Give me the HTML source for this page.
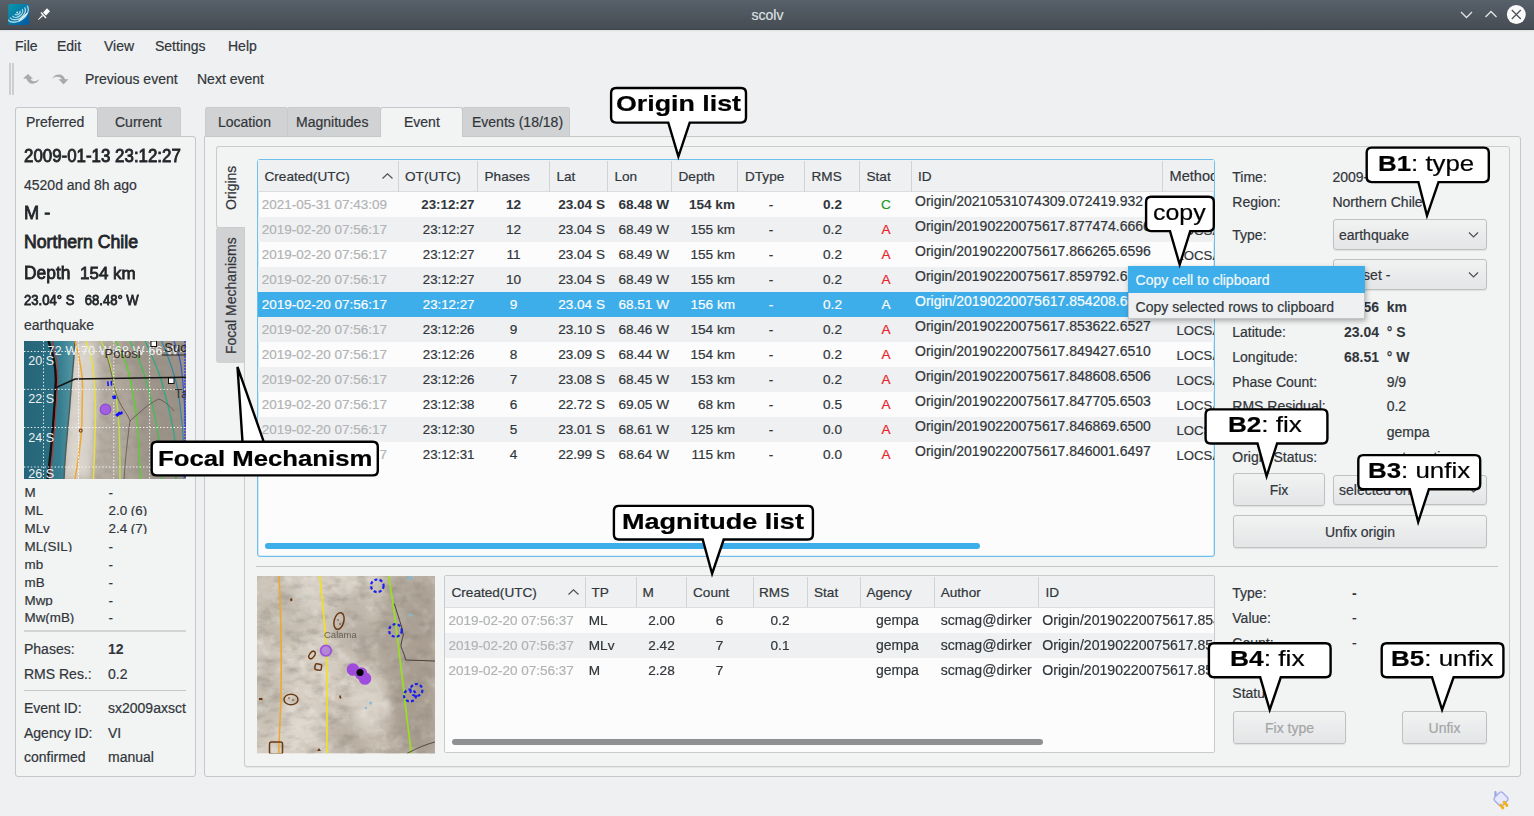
<!DOCTYPE html>
<html><head><meta charset="utf-8"><title>scolv</title><style>*{box-sizing:border-box;margin:0;padding:0}
html,body{width:1534px;height:816px;overflow:hidden}
body{background:#eff0f1;font-family:"Liberation Sans",sans-serif;font-size:14px;color:#31363b;position:relative}
.a{position:absolute}
.t{position:absolute;white-space:nowrap;line-height:1;-webkit-text-stroke:0.2px currentColor}
svg{position:absolute;overflow:visible}
</style></head><body>
<div class="a" style="left:0px;top:0px;width:1534px;height:30px;background:linear-gradient(#57616a,#464c53 96%,#3e4349 96%)"></div>
<div class="a" style="left:0px;top:30px;width:1534px;height:2px;background:linear-gradient(#e2e3e4,#eceded)"></div>
<svg style="left:0;top:0" width="60" height="30"><defs><linearGradient id="ig" x1="0" y1="0" x2="1" y2="1"><stop offset="0" stop-color="#0a9aab"/><stop offset="1" stop-color="#0058a6"/></linearGradient></defs>
<rect x="8.2" y="3.9" width="21" height="21" rx="2.5" fill="url(#ig)"/>
<clipPath id="icc"><rect x="8.2" y="3.9" width="21" height="21" rx="2.5"/></clipPath><g clip-path="url(#icc)"><g fill="none" stroke="#cdebf1" stroke-width="1.3" opacity="0.85"><path d="M14.84 14.22 A3 2.16 -35 0 0 19.76 10.78"/><path d="M12.39 15.94 A6 4.32 -35 0 0 22.21 9.06"/><path d="M9.93 17.66 A9 6.4799999999999995 -35 0 0 24.67 7.34"/><path d="M7.47 19.38 A12 8.64 -35 0 0 27.13 5.62"/></g>
<path d="M18.8 21.1 L27.4 13.3" stroke="#e8f6f8" stroke-width="1.4"/></g>
<circle cx="17.2" cy="12.5" r="0.9" fill="#cfeef3"/>
<g fill="#fff"><path d="M43 12.5 L47 8.2 L50 11.3 L46 15.5 Z"/><path d="M41.5 12 L46.5 17.5 L45.5 18.5 L40.5 13 Z"/><path d="M43 16 L38.5 20 L38 19.5 L42 15 Z"/></g>
</svg>
<div class="t" style="left:751.5px;top:8.15px;font-size:14px;color:#dfe1e3">scolv</div>
<svg style="left:1440px;top:0" width="94" height="30">
<path d="M21 12 L26.5 17.5 L32 12" fill="none" stroke="#e3e5e7" stroke-width="1.3"/>
<path d="M45.5 17 L51 11.5 L56.5 17" fill="none" stroke="#e3e5e7" stroke-width="1.3"/>
<circle cx="76.3" cy="14.5" r="9.4" fill="#fbfbfb"/>
<path d="M71.8 10 L80.8 19 M80.8 10 L71.8 19" stroke="#4b5056" stroke-width="1.2"/>
</svg>
<div class="t" style="left:15px;top:39.15px;font-size:14px">File</div>
<div class="t" style="left:57px;top:39.15px;font-size:14px">Edit</div>
<div class="t" style="left:104px;top:39.15px;font-size:14px">View</div>
<div class="t" style="left:155px;top:39.15px;font-size:14px">Settings</div>
<div class="t" style="left:228px;top:39.15px;font-size:14px">Help</div>
<div class="a" style="left:9px;top:63px;width:2px;height:32px;background:#cdcecf"></div>
<div class="a" style="left:12px;top:63px;width:2px;height:32px;background:#cdcecf"></div>
<svg style="left:0;top:60px" width="80" height="40">
<path d="M23 18.5 L28 14 L33 18.8 L30.5 18.8 C31.5 21.5 34 22.5 39.5 19.3 C37 24 29 26.5 26.5 18.8 Z" fill="#a9aaab"/>
<path d="M52 19 C55 13 63.5 13 65 19.3 L68.5 19.3 L63.5 24.5 L58.5 19.3 L62 19.3 C60 16 55 16 52 19 Z" fill="#a9aaab"/>
</svg>
<div class="t" style="left:85px;top:72.15px;font-size:14px">Previous event</div>
<div class="t" style="left:197px;top:72.15px;font-size:14px">Next event</div>
<div class="a" style="left:15px;top:136px;width:181px;height:641px;background:#f2f3f3;border:1px solid #c6c7c8;border-radius:0 3px 3px 3px"></div>
<div class="a" style="left:97px;top:107px;width:84px;height:29px;background:#d1d2d3;border:1px solid #c9cacb;border-bottom:none;border-radius:3px 3px 0 0"></div>
<div class="a" style="left:15px;top:107px;width:83px;height:30px;background:#f2f3f3;border:1px solid #c6c7c8;border-bottom:none;border-radius:3px 3px 0 0"></div>
<div class="t" style="left:26px;top:115.35px;font-size:14px">Preferred</div>
<div class="t" style="left:115px;top:115.35px;font-size:14px">Current</div>
<div class="t" style="left:24px;top:149.49px;font-size:16.9px;color:#232629;-webkit-text-stroke:0.8px currentColor;transform:scaleY(1.08);transform-origin:0 14.31px">2009-01-13 23:12:27</div>
<div class="t" style="left:24px;top:178.15px;font-size:14px">4520d and 8h ago</div>
<div class="t" style="left:24px;top:203.59px;font-size:18.2px;color:#232629;-webkit-text-stroke:0.8px currentColor;transform:scaleY(1.05);transform-origin:0 15.41px">M -</div>
<div class="t" style="left:24px;top:234.02px;font-size:17.7px;color:#232629;-webkit-text-stroke:0.8px currentColor;transform:scaleY(1.0);transform-origin:0 14.98px">Northern Chile</div>
<div class="t" style="left:24px;top:264.57px;font-size:17.4px;color:#232629;-webkit-text-stroke:0.8px currentColor;transform:scaleY(1.02);transform-origin:0 14.73px">Depth</div>
<div class="t" style="left:80px;top:264.91px;font-size:17.0px;color:#232629;-webkit-text-stroke:0.8px currentColor;transform:scaleY(1.02);transform-origin:0 14.39px">154 km</div>
<div class="t" style="left:24px;top:294.11px;font-size:13.1px;color:#232629;-webkit-text-stroke:0.75px currentColor;transform:scaleY(1.05);transform-origin:0 11.09px">23.04° S</div>
<div class="t" style="left:84.7px;top:294.11px;font-size:13.1px;color:#232629;-webkit-text-stroke:0.75px currentColor;transform:scaleY(1.05);transform-origin:0 11.09px">68.48° W</div>
<div class="t" style="left:24px;top:318.15px;font-size:14px">earthquake</div>
<svg style="left:24px;top:341px" width="162" height="138" viewBox="0 0 162 138">
<defs><clipPath id="c1"><rect width="162" height="138"/></clipPath>
<linearGradient id="oc" x1="0" x2="1"><stop offset="0" stop-color="#2b6c80"/><stop offset="0.7" stop-color="#357d8f"/><stop offset="1" stop-color="#5a9aa5"/></linearGradient>
<linearGradient id="ld" x1="0" x2="1"><stop offset="0" stop-color="#d6d1ca"/><stop offset="0.2" stop-color="#c0b8ae"/><stop offset="0.6" stop-color="#b0a79c"/><stop offset="1" stop-color="#a39a8f"/></linearGradient>
<filter id="bl1" x="-50%" y="-50%" width="200%" height="200%"><feGaussianBlur stdDeviation="4"/></filter><filter id="nz1"><feTurbulence type="fractalNoise" baseFrequency="0.12" numOctaves="3" seed="7"/><feColorMatrix values="0 0 0 0 0.3  0 0 0 0 0.27  0 0 0 0 0.24  0 0 0 1.3 -0.55"/></filter></defs>
<g clip-path="url(#c1)">
<rect width="162" height="138" fill="url(#ld)"/>
<rect width="162" height="138" filter="url(#nz1)" opacity="0.8"/>
<g filter="url(#bl1)"><path d="M48 0 L72 0 C74 40 72 90 66 138 L40 138 C42 100 46 50 48 0 Z" fill="#e4e0da" opacity="0.75"/><path d="M100 0 L162 0 L162 138 L110 138 C115 90 110 40 100 0 Z" fill="#7d7468" opacity="0.25"/></g>
<path d="M0 0 L51 0 C50 20 47 45 45.6 67.5 C44 85 42 104 41 120 L40 138 L0 138 Z" fill="url(#oc)"/>
<path d="M0 0 L30 0 C34 30 32 90 26 138 L0 138 Z" fill="#1e5a6c" opacity="0.35"/>
<path d="M51 0 C50 20 47 45 45.6 67.5 C44 85 42 104 41 120 L40 138" stroke="#4a5f60" stroke-width="1.5" fill="none"/>
<path d="M24.5 0 C30 15 32 30 31.8 40 C31 60 29.5 80 29 86 C27 110 25 125 23.6 138" stroke="#111" stroke-width="2.4" fill="none"/>
<path d="M28 0 C33 15 34 30 33.7 40 C32 70 29 110 26.3 138" stroke="#c8302a" stroke-width="1" fill="none"/>
<path d="M51 0 C57 20 59 40 58.5 49 C58 70 58 80 57.6 89.6 C56 110 53 125 51 138" stroke="#f0a830" stroke-width="1.5" fill="none"/>
<path d="M62 0 C66 10 69 20 69.5 30.8 C71 50 71.5 65 71.4 76.7 C71 100 70 120 69.5 138" stroke="#e8e040" stroke-width="1.5" fill="none"/>
<path d="M77 0 C82 10 86 20 88 31 C92 50 94 70 95 86 C96 105 96 120 96 138" stroke="#b8e040" stroke-width="1.4" fill="none"/>
<path d="M91.6 0 C97 10 101 20 104.5 31 C109 50 112 70 113.6 86 C115 105 116 120 116.4 138" stroke="#58d030" stroke-width="1.4" fill="none"/>
<path d="M106 0 C114 15 120 30 124.7 49 C130 70 134 90 135.7 104 C137 120 137.5 130 137.5 138" stroke="#40c050" stroke-width="1.3" fill="none"/>
<path d="M121 0 C128 15 134 28 137.5 40 C143 60 148 80 150.4 95 C152 115 152 125 152 138" stroke="#30a880" stroke-width="1.3" fill="none"/>
<path d="M137.5 0 C144 15 150 30 154 49 C157 70 159 90 159.6 104 C160 120 160 130 160 138" stroke="#3088a8" stroke-width="1.2" fill="none"/>
<path d="M150 0 C154 10 157 20 157.8 31 C160 50 161 70 161.4 86" stroke="#3858c8" stroke-width="1.2" fill="none"/>
<path d="M161 0 V138" stroke="#4040d0" stroke-width="1.5" stroke-dasharray="2 1" fill="none"/>
<path d="M80 6 C83 15 86 25 88 35 C90 45 92 55 96 62 C100 70 104 74 106 80 C104 95 102 110 100 138" stroke="#5a5048" stroke-width="0.8" fill="none"/>
<path d="M106 80 C115 72 125 62 135 58 C140 60 145 64 150 70" stroke="#5a5048" stroke-width="0.8" fill="none"/>
<path d="M31 47 L51 38 L162 36.3" stroke="#151515" stroke-width="1.6" fill="none"/>
<g stroke="#ffffff" stroke-width="1" stroke-dasharray="1.4 2" opacity="0.9">
<path d="M0 10.5 H162 M0 48.4 H162 M0 86.5 H162 M0 126 H162 M19.5 0 V138 M54.5 0 V138 M89.75 0 V138 M125.6 0 V138"/></g>
<g fill="#eef2f3" font-family="Liberation Sans" font-size="12.5"><text x="4.3" y="24.3">20 S</text><text x="4.3" y="62">22 S</text><text x="4.3" y="100.6">24 S</text><text x="4.3" y="137.4">26 S</text>
<text x="23.6" y="14.2" font-size="12.3" letter-spacing="0.3">72 W 70 W 68 W 66 W</text></g>
<text x="80.5" y="17" font-family="Liberation Sans" font-size="13" fill="#3a3028" letter-spacing="0">Potosi</text>
<rect x="127" y="0" width="5.5" height="5.5" fill="#fff" stroke="#111"/>
<rect x="144.5" y="37" width="5.5" height="5.5" fill="#fff" stroke="#111"/>
<text x="140.3" y="11" font-family="Liberation Sans" font-size="13" fill="#222">Suc</text>
<path d="M138 14 H162" stroke="#222" stroke-width="1"/>
<text x="150.4" y="57" font-family="Liberation Sans" font-size="13" fill="#3a342c">Ta</text>
<circle cx="81.5" cy="68.4" r="5.3" fill="#a058e8" stroke="#8a40d8" stroke-width="1.2" opacity="0.9"/>
<g fill="#1010ff"><path d="M83 40.5 L84.5 40.2 L85 45 L83.5 45.3 Z"/><path d="M86.5 40 L88 39.7 L88.3 44.5 L86.8 44.8 Z"/><path d="M88 55 L91.5 54 L92.5 57.5 L89 58.5 Z"/><path d="M91 74 L95 70.5 L97.5 72 L93.5 76 Z"/><path d="M95.5 72 L98 70 L99 72.5 L96.5 74 Z"/></g>
<circle cx="56.7" cy="89.6" r="1.5" fill="none" stroke="#7a4a20" stroke-width="1.2"/>
</g></svg>
<div class="a" style="left:20px;top:483px;width:170px;height:15px;overflow:hidden">
<div class="t" style="left:4.5px;top:2.66px;font-size:13.4px">M</div>
<div class="t" style="left:88.5px;top:2.66px;font-size:13.4px">-</div>
</div>
<div class="a" style="left:20px;top:501px;width:170px;height:15px;overflow:hidden">
<div class="t" style="left:4.5px;top:2.66px;font-size:13.4px">ML</div>
<div class="t" style="left:88.5px;top:2.66px;font-size:13.4px">2.0 (6)</div>
</div>
<div class="a" style="left:20px;top:519px;width:170px;height:15px;overflow:hidden">
<div class="t" style="left:4.5px;top:2.66px;font-size:13.4px">MLv</div>
<div class="t" style="left:88.5px;top:2.66px;font-size:13.4px">2.4 (7)</div>
</div>
<div class="a" style="left:20px;top:537px;width:170px;height:15px;overflow:hidden">
<div class="t" style="left:4.5px;top:2.66px;font-size:13.4px">ML(SIL)</div>
<div class="t" style="left:88.5px;top:2.66px;font-size:13.4px">-</div>
</div>
<div class="a" style="left:20px;top:555px;width:170px;height:15px;overflow:hidden">
<div class="t" style="left:4.5px;top:2.66px;font-size:13.4px">mb</div>
<div class="t" style="left:88.5px;top:2.66px;font-size:13.4px">-</div>
</div>
<div class="a" style="left:20px;top:573px;width:170px;height:15px;overflow:hidden">
<div class="t" style="left:4.5px;top:2.66px;font-size:13.4px">mB</div>
<div class="t" style="left:88.5px;top:2.66px;font-size:13.4px">-</div>
</div>
<div class="a" style="left:20px;top:591px;width:170px;height:15px;overflow:hidden">
<div class="t" style="left:4.5px;top:2.66px;font-size:13.4px">Mwp</div>
<div class="t" style="left:88.5px;top:2.66px;font-size:13.4px">-</div>
</div>
<div class="a" style="left:20px;top:608.5px;width:170px;height:15px;overflow:hidden">
<div class="t" style="left:4.5px;top:2.66px;font-size:13.4px">Mw(mB)</div>
<div class="t" style="left:88.5px;top:2.66px;font-size:13.4px">-</div>
</div>
<div class="a" style="left:24px;top:630px;width:162px;height:2px;background:#d3d4d5"></div>
<div class="t" style="left:24px;top:641.65px;font-size:14px">Phases:</div>
<div class="t" style="left:108px;top:641.65px;font-size:14px;font-weight:bold;-webkit-text-stroke:0.05px currentColor">12</div>
<div class="t" style="left:24px;top:666.65px;font-size:14px">RMS Res.:</div>
<div class="t" style="left:108px;top:666.65px;font-size:14px">0.2</div>
<div class="a" style="left:24px;top:690px;width:162px;height:1px;background:#c6c7c8"></div>
<div class="t" style="left:24px;top:700.85px;font-size:14px">Event ID:</div>
<div class="t" style="left:108px;top:700.85px;font-size:14px">sx2009axsct</div>
<div class="t" style="left:24px;top:726.15px;font-size:14px">Agency ID:</div>
<div class="t" style="left:108px;top:726.15px;font-size:14px">VI</div>
<div class="t" style="left:24px;top:750.15px;font-size:14px">confirmed</div>
<div class="t" style="left:108px;top:750.15px;font-size:14px">manual</div>
<div class="a" style="left:204px;top:136px;width:1317px;height:641px;background:#f2f3f3;border:1px solid #c6c7c8;border-radius:0 3px 3px 3px"></div>
<div class="a" style="left:205px;top:107px;width:83px;height:29px;background:#d1d2d3;border:1px solid #c9cacb;border-bottom:none;border-radius:3px 3px 0 0"></div>
<div class="a" style="left:287px;top:107px;width:94px;height:29px;background:#d1d2d3;border:1px solid #c9cacb;border-bottom:none;border-radius:3px 3px 0 0"></div>
<div class="a" style="left:462px;top:107px;width:108px;height:29px;background:#d1d2d3;border:1px solid #c9cacb;border-bottom:none;border-radius:3px 3px 0 0"></div>
<div class="a" style="left:380px;top:107px;width:83px;height:30px;background:#f2f3f3;border:1px solid #c6c7c8;border-bottom:none;border-radius:3px 3px 0 0"></div>
<div class="t" style="left:218px;top:115.35px;font-size:14px">Location</div>
<div class="t" style="left:296px;top:115.35px;font-size:14px">Magnitudes</div>
<div class="t" style="left:404px;top:115.35px;font-size:14px">Event</div>
<div class="t" style="left:472px;top:115.35px;font-size:14px">Events (18/18)</div>
<div class="a" style="left:244px;top:146px;width:1266px;height:621px;background:#f2f3f3;border:1px solid #cbcccd;border-radius:0 3px 3px 3px;box-shadow:0 1px 1px rgba(0,0,0,0.06)"></div>
<div class="a" style="left:216px;top:227px;width:28px;height:136px;background:#d1d2d3;border-radius:3px 0 0 3px"></div>
<div class="a" style="left:216px;top:146px;width:29px;height:82px;background:#f2f3f3;border:1px solid #cbcccd;border-right:none;border-radius:3px 0 0 3px"></div>
<div class="t" style="left:224px;top:210px;font-size:14px;transform:rotate(-90deg);transform-origin:0 0">Origins</div>
<div class="t" style="left:224px;top:354px;font-size:14px;transform:rotate(-90deg);transform-origin:0 0">Focal Mechanisms</div>
<div class="a" style="left:257px;top:159px;width:958px;height:398px;background:#fcfcfc;border:1px solid #6ebfea;border-radius:3px;box-shadow:inset 0 0 0 0.6px #b5def3"></div>
<div class="a" style="left:258px;top:160px;width:956px;height:32px;background:#eff0f1;border-bottom:1px solid #dcdddd"></div>
<div class="a" style="left:398px;top:161px;width:1px;height:31px;background:#d2d3d4"></div>
<div class="a" style="left:477px;top:161px;width:1px;height:31px;background:#d2d3d4"></div>
<div class="a" style="left:549px;top:161px;width:1px;height:31px;background:#d2d3d4"></div>
<div class="a" style="left:607px;top:161px;width:1px;height:31px;background:#d2d3d4"></div>
<div class="a" style="left:671px;top:161px;width:1px;height:31px;background:#d2d3d4"></div>
<div class="a" style="left:737px;top:161px;width:1px;height:31px;background:#d2d3d4"></div>
<div class="a" style="left:804px;top:161px;width:1px;height:31px;background:#d2d3d4"></div>
<div class="a" style="left:859px;top:161px;width:1px;height:31px;background:#d2d3d4"></div>
<div class="a" style="left:911px;top:161px;width:1px;height:31px;background:#d2d3d4"></div>
<div class="a" style="left:1162px;top:161px;width:1px;height:31px;background:#d2d3d4"></div>
<div class="t" style="left:264.5px;top:170.19px;font-size:13.6px">Created(UTC)</div>
<div class="t" style="left:405px;top:170.19px;font-size:13.6px">OT(UTC)</div>
<div class="t" style="left:484.5px;top:170.19px;font-size:13.6px">Phases</div>
<div class="t" style="left:556.5px;top:170.19px;font-size:13.6px">Lat</div>
<div class="t" style="left:614.5px;top:170.19px;font-size:13.6px">Lon</div>
<div class="t" style="left:678.5px;top:170.19px;font-size:13.6px">Depth</div>
<div class="t" style="left:745px;top:170.19px;font-size:13.6px">DType</div>
<div class="t" style="left:811.5px;top:170.19px;font-size:13.6px">RMS</div>
<div class="t" style="left:866.5px;top:170.19px;font-size:13.6px">Stat</div>
<div class="t" style="left:918px;top:170.19px;font-size:13.6px">ID</div>
<div class="a" style="left:1163px;top:161px;width:51px;height:30px;overflow:hidden">
<div class="t" style="left:6.5px;top:8.34px;font-size:14.6px">Method</div>
</div>
<svg style="left:380px;top:170px" width="16" height="12"><path d="M2.5 8.5 L7.5 3.8 L12.5 8.5" fill="none" stroke="#4d5257" stroke-width="1.2"/></svg>
<div class="a" style="left:258px;top:192px;width:956px;height:340px;overflow:hidden">
<div class="t" style="left:3.6999999999999886px;top:5.87px;font-size:13.5px;color:#b1b3b5">2021-05-31 07:43:09</div>
<div class="t" style="left:136.5px;top:6.04px;font-size:13.3px;font-weight:bold;-webkit-text-stroke:0.05px currentColor;color:#31363b;width:80px;text-align:right">23:12:27</div>
<div class="t" style="left:225.5px;top:5.79px;font-size:13.6px;font-weight:bold;-webkit-text-stroke:0.05px currentColor;color:#31363b;width:60px;text-align:center">12</div>
<div class="t" style="left:287px;top:5.79px;font-size:13.6px;font-weight:bold;-webkit-text-stroke:0.05px currentColor;color:#31363b;width:60px;text-align:right">23.04 S</div>
<div class="t" style="left:341px;top:5.79px;font-size:13.6px;font-weight:bold;-webkit-text-stroke:0.05px currentColor;color:#31363b;width:70px;text-align:right">68.48 W</div>
<div class="t" style="left:407px;top:5.79px;font-size:13.6px;font-weight:bold;-webkit-text-stroke:0.05px currentColor;color:#31363b;width:70px;text-align:right">154 km</div>
<div class="t" style="left:493.0px;top:5.79px;font-size:13.6px;color:#31363b;width:40px;text-align:center">-</div>
<div class="t" style="left:549.5px;top:5.79px;font-size:13.6px;font-weight:bold;-webkit-text-stroke:0.05px currentColor;color:#31363b;width:50px;text-align:center">0.2</div>
<div class="t" style="left:613.0px;top:5.79px;font-size:13.6px;color:#1e9a1e;width:30px;text-align:center">C</div>
<div class="a" style="left:654px;top:0px;width:250px;height:25px;overflow:hidden">
<div class="t" style="left:3px;top:2.45px;font-size:14px;color:#31363b">Origin/20210531074309.072419.932</div>
</div>
<div class="a" style="left:905px;top:0px;width:51px;height:25px;overflow:hidden">
<div class="t" style="left:13.5px;top:6.63px;font-size:13.2px;color:#31363b">LOCSAT</div>
</div>
<div class="a" style="left:0px;top:25px;width:956px;height:25px;background:#eff0f1"></div>
<div class="t" style="left:3.6999999999999886px;top:30.87px;font-size:13.5px;color:#b1b3b5">2019-02-20 07:56:17</div>
<div class="t" style="left:136.5px;top:31.04px;font-size:13.3px;color:#31363b;width:80px;text-align:right">23:12:27</div>
<div class="t" style="left:225.5px;top:30.79px;font-size:13.6px;color:#31363b;width:60px;text-align:center">12</div>
<div class="t" style="left:287px;top:30.79px;font-size:13.6px;color:#31363b;width:60px;text-align:right">23.04 S</div>
<div class="t" style="left:341px;top:30.79px;font-size:13.6px;color:#31363b;width:70px;text-align:right">68.49 W</div>
<div class="t" style="left:407px;top:30.79px;font-size:13.6px;color:#31363b;width:70px;text-align:right">155 km</div>
<div class="t" style="left:493.0px;top:30.79px;font-size:13.6px;color:#31363b;width:40px;text-align:center">-</div>
<div class="t" style="left:549.5px;top:30.79px;font-size:13.6px;color:#31363b;width:50px;text-align:center">0.2</div>
<div class="t" style="left:613.0px;top:30.79px;font-size:13.6px;color:#e8242a;width:30px;text-align:center">A</div>
<div class="a" style="left:654px;top:25px;width:250px;height:25px;overflow:hidden">
<div class="t" style="left:3px;top:2.45px;font-size:14px;color:#31363b">Origin/20190220075617.877474.6666</div>
</div>
<div class="a" style="left:905px;top:25px;width:51px;height:25px;overflow:hidden">
<div class="t" style="left:13.5px;top:6.63px;font-size:13.2px;color:#31363b">LOCSAT</div>
</div>
<div class="t" style="left:3.6999999999999886px;top:55.87px;font-size:13.5px;color:#b1b3b5">2019-02-20 07:56:17</div>
<div class="t" style="left:136.5px;top:56.04px;font-size:13.3px;color:#31363b;width:80px;text-align:right">23:12:27</div>
<div class="t" style="left:225.5px;top:55.79px;font-size:13.6px;color:#31363b;width:60px;text-align:center">11</div>
<div class="t" style="left:287px;top:55.79px;font-size:13.6px;color:#31363b;width:60px;text-align:right">23.04 S</div>
<div class="t" style="left:341px;top:55.79px;font-size:13.6px;color:#31363b;width:70px;text-align:right">68.49 W</div>
<div class="t" style="left:407px;top:55.79px;font-size:13.6px;color:#31363b;width:70px;text-align:right">155 km</div>
<div class="t" style="left:493.0px;top:55.79px;font-size:13.6px;color:#31363b;width:40px;text-align:center">-</div>
<div class="t" style="left:549.5px;top:55.79px;font-size:13.6px;color:#31363b;width:50px;text-align:center">0.2</div>
<div class="t" style="left:613.0px;top:55.79px;font-size:13.6px;color:#e8242a;width:30px;text-align:center">A</div>
<div class="a" style="left:654px;top:50px;width:250px;height:25px;overflow:hidden">
<div class="t" style="left:3px;top:2.45px;font-size:14px;color:#31363b">Origin/20190220075617.866265.6596</div>
</div>
<div class="a" style="left:905px;top:50px;width:51px;height:25px;overflow:hidden">
<div class="t" style="left:13.5px;top:6.63px;font-size:13.2px;color:#31363b">LOCSAT</div>
</div>
<div class="a" style="left:0px;top:75px;width:956px;height:25px;background:#eff0f1"></div>
<div class="t" style="left:3.6999999999999886px;top:80.87px;font-size:13.5px;color:#b1b3b5">2019-02-20 07:56:17</div>
<div class="t" style="left:136.5px;top:81.04px;font-size:13.3px;color:#31363b;width:80px;text-align:right">23:12:27</div>
<div class="t" style="left:225.5px;top:80.79px;font-size:13.6px;color:#31363b;width:60px;text-align:center">10</div>
<div class="t" style="left:287px;top:80.79px;font-size:13.6px;color:#31363b;width:60px;text-align:right">23.04 S</div>
<div class="t" style="left:341px;top:80.79px;font-size:13.6px;color:#31363b;width:70px;text-align:right">68.49 W</div>
<div class="t" style="left:407px;top:80.79px;font-size:13.6px;color:#31363b;width:70px;text-align:right">155 km</div>
<div class="t" style="left:493.0px;top:80.79px;font-size:13.6px;color:#31363b;width:40px;text-align:center">-</div>
<div class="t" style="left:549.5px;top:80.79px;font-size:13.6px;color:#31363b;width:50px;text-align:center">0.2</div>
<div class="t" style="left:613.0px;top:80.79px;font-size:13.6px;color:#e8242a;width:30px;text-align:center">A</div>
<div class="a" style="left:654px;top:75px;width:250px;height:25px;overflow:hidden">
<div class="t" style="left:3px;top:2.45px;font-size:14px;color:#31363b">Origin/20190220075617.859792.6581</div>
</div>
<div class="a" style="left:905px;top:75px;width:51px;height:25px;overflow:hidden">
<div class="t" style="left:13.5px;top:6.63px;font-size:13.2px;color:#31363b">LOCSAT</div>
</div>
<div class="a" style="left:0px;top:100px;width:956px;height:25px;background:#3daee9"></div>
<div class="t" style="left:3.6999999999999886px;top:105.87px;font-size:13.5px;color:#fcfcfc">2019-02-20 07:56:17</div>
<div class="t" style="left:136.5px;top:106.04px;font-size:13.3px;color:#fcfcfc;width:80px;text-align:right">23:12:27</div>
<div class="t" style="left:225.5px;top:105.79px;font-size:13.6px;color:#fcfcfc;width:60px;text-align:center">9</div>
<div class="t" style="left:287px;top:105.79px;font-size:13.6px;color:#fcfcfc;width:60px;text-align:right">23.04 S</div>
<div class="t" style="left:341px;top:105.79px;font-size:13.6px;color:#fcfcfc;width:70px;text-align:right">68.51 W</div>
<div class="t" style="left:407px;top:105.79px;font-size:13.6px;color:#fcfcfc;width:70px;text-align:right">156 km</div>
<div class="t" style="left:493.0px;top:105.79px;font-size:13.6px;color:#fcfcfc;width:40px;text-align:center">-</div>
<div class="t" style="left:549.5px;top:105.79px;font-size:13.6px;color:#fcfcfc;width:50px;text-align:center">0.2</div>
<div class="t" style="left:613.0px;top:105.79px;font-size:13.6px;color:#fcfcfc;width:30px;text-align:center">A</div>
<div class="a" style="left:654px;top:100px;width:250px;height:25px;overflow:hidden">
<div class="t" style="left:3px;top:2.45px;font-size:14px;color:#fcfcfc">Origin/20190220075617.854208.6543</div>
</div>
<div class="a" style="left:905px;top:100px;width:51px;height:25px;overflow:hidden">
<div class="t" style="left:13.5px;top:6.63px;font-size:13.2px;color:#fcfcfc">LOCSAT</div>
</div>
<div class="a" style="left:0px;top:125px;width:956px;height:25px;background:#eff0f1"></div>
<div class="t" style="left:3.6999999999999886px;top:130.87px;font-size:13.5px;color:#b1b3b5">2019-02-20 07:56:17</div>
<div class="t" style="left:136.5px;top:131.04px;font-size:13.3px;color:#31363b;width:80px;text-align:right">23:12:26</div>
<div class="t" style="left:225.5px;top:130.79px;font-size:13.6px;color:#31363b;width:60px;text-align:center">9</div>
<div class="t" style="left:287px;top:130.79px;font-size:13.6px;color:#31363b;width:60px;text-align:right">23.10 S</div>
<div class="t" style="left:341px;top:130.79px;font-size:13.6px;color:#31363b;width:70px;text-align:right">68.46 W</div>
<div class="t" style="left:407px;top:130.79px;font-size:13.6px;color:#31363b;width:70px;text-align:right">154 km</div>
<div class="t" style="left:493.0px;top:130.79px;font-size:13.6px;color:#31363b;width:40px;text-align:center">-</div>
<div class="t" style="left:549.5px;top:130.79px;font-size:13.6px;color:#31363b;width:50px;text-align:center">0.2</div>
<div class="t" style="left:613.0px;top:130.79px;font-size:13.6px;color:#e8242a;width:30px;text-align:center">A</div>
<div class="a" style="left:654px;top:125px;width:250px;height:25px;overflow:hidden">
<div class="t" style="left:3px;top:2.45px;font-size:14px;color:#31363b">Origin/20190220075617.853622.6527</div>
</div>
<div class="a" style="left:905px;top:125px;width:51px;height:25px;overflow:hidden">
<div class="t" style="left:13.5px;top:6.63px;font-size:13.2px;color:#31363b">LOCSAT</div>
</div>
<div class="t" style="left:3.6999999999999886px;top:155.87px;font-size:13.5px;color:#b1b3b5">2019-02-20 07:56:17</div>
<div class="t" style="left:136.5px;top:156.04px;font-size:13.3px;color:#31363b;width:80px;text-align:right">23:12:26</div>
<div class="t" style="left:225.5px;top:155.79px;font-size:13.6px;color:#31363b;width:60px;text-align:center">8</div>
<div class="t" style="left:287px;top:155.79px;font-size:13.6px;color:#31363b;width:60px;text-align:right">23.09 S</div>
<div class="t" style="left:341px;top:155.79px;font-size:13.6px;color:#31363b;width:70px;text-align:right">68.44 W</div>
<div class="t" style="left:407px;top:155.79px;font-size:13.6px;color:#31363b;width:70px;text-align:right">154 km</div>
<div class="t" style="left:493.0px;top:155.79px;font-size:13.6px;color:#31363b;width:40px;text-align:center">-</div>
<div class="t" style="left:549.5px;top:155.79px;font-size:13.6px;color:#31363b;width:50px;text-align:center">0.2</div>
<div class="t" style="left:613.0px;top:155.79px;font-size:13.6px;color:#e8242a;width:30px;text-align:center">A</div>
<div class="a" style="left:654px;top:150px;width:250px;height:25px;overflow:hidden">
<div class="t" style="left:3px;top:2.45px;font-size:14px;color:#31363b">Origin/20190220075617.849427.6510</div>
</div>
<div class="a" style="left:905px;top:150px;width:51px;height:25px;overflow:hidden">
<div class="t" style="left:13.5px;top:6.63px;font-size:13.2px;color:#31363b">LOCSAT</div>
</div>
<div class="a" style="left:0px;top:175px;width:956px;height:25px;background:#eff0f1"></div>
<div class="t" style="left:3.6999999999999886px;top:180.87px;font-size:13.5px;color:#b1b3b5">2019-02-20 07:56:17</div>
<div class="t" style="left:136.5px;top:181.04px;font-size:13.3px;color:#31363b;width:80px;text-align:right">23:12:26</div>
<div class="t" style="left:225.5px;top:180.79px;font-size:13.6px;color:#31363b;width:60px;text-align:center">7</div>
<div class="t" style="left:287px;top:180.79px;font-size:13.6px;color:#31363b;width:60px;text-align:right">23.08 S</div>
<div class="t" style="left:341px;top:180.79px;font-size:13.6px;color:#31363b;width:70px;text-align:right">68.45 W</div>
<div class="t" style="left:407px;top:180.79px;font-size:13.6px;color:#31363b;width:70px;text-align:right">153 km</div>
<div class="t" style="left:493.0px;top:180.79px;font-size:13.6px;color:#31363b;width:40px;text-align:center">-</div>
<div class="t" style="left:549.5px;top:180.79px;font-size:13.6px;color:#31363b;width:50px;text-align:center">0.2</div>
<div class="t" style="left:613.0px;top:180.79px;font-size:13.6px;color:#e8242a;width:30px;text-align:center">A</div>
<div class="a" style="left:654px;top:175px;width:250px;height:25px;overflow:hidden">
<div class="t" style="left:3px;top:2.45px;font-size:14px;color:#31363b">Origin/20190220075617.848608.6506</div>
</div>
<div class="a" style="left:905px;top:175px;width:51px;height:25px;overflow:hidden">
<div class="t" style="left:13.5px;top:6.63px;font-size:13.2px;color:#31363b">LOCSAT</div>
</div>
<div class="t" style="left:3.6999999999999886px;top:205.87px;font-size:13.5px;color:#b1b3b5">2019-02-20 07:56:17</div>
<div class="t" style="left:136.5px;top:206.04px;font-size:13.3px;color:#31363b;width:80px;text-align:right">23:12:38</div>
<div class="t" style="left:225.5px;top:205.79px;font-size:13.6px;color:#31363b;width:60px;text-align:center">6</div>
<div class="t" style="left:287px;top:205.79px;font-size:13.6px;color:#31363b;width:60px;text-align:right">22.72 S</div>
<div class="t" style="left:341px;top:205.79px;font-size:13.6px;color:#31363b;width:70px;text-align:right">69.05 W</div>
<div class="t" style="left:407px;top:205.79px;font-size:13.6px;color:#31363b;width:70px;text-align:right">68 km</div>
<div class="t" style="left:493.0px;top:205.79px;font-size:13.6px;color:#31363b;width:40px;text-align:center">-</div>
<div class="t" style="left:549.5px;top:205.79px;font-size:13.6px;color:#31363b;width:50px;text-align:center">0.5</div>
<div class="t" style="left:613.0px;top:205.79px;font-size:13.6px;color:#e8242a;width:30px;text-align:center">A</div>
<div class="a" style="left:654px;top:200px;width:250px;height:25px;overflow:hidden">
<div class="t" style="left:3px;top:2.45px;font-size:14px;color:#31363b">Origin/20190220075617.847705.6503</div>
</div>
<div class="a" style="left:905px;top:200px;width:51px;height:25px;overflow:hidden">
<div class="t" style="left:13.5px;top:6.63px;font-size:13.2px;color:#31363b">LOCSAT</div>
</div>
<div class="a" style="left:0px;top:225px;width:956px;height:25px;background:#eff0f1"></div>
<div class="t" style="left:3.6999999999999886px;top:230.87px;font-size:13.5px;color:#b1b3b5">2019-02-20 07:56:17</div>
<div class="t" style="left:136.5px;top:231.04px;font-size:13.3px;color:#31363b;width:80px;text-align:right">23:12:30</div>
<div class="t" style="left:225.5px;top:230.79px;font-size:13.6px;color:#31363b;width:60px;text-align:center">5</div>
<div class="t" style="left:287px;top:230.79px;font-size:13.6px;color:#31363b;width:60px;text-align:right">23.01 S</div>
<div class="t" style="left:341px;top:230.79px;font-size:13.6px;color:#31363b;width:70px;text-align:right">68.61 W</div>
<div class="t" style="left:407px;top:230.79px;font-size:13.6px;color:#31363b;width:70px;text-align:right">125 km</div>
<div class="t" style="left:493.0px;top:230.79px;font-size:13.6px;color:#31363b;width:40px;text-align:center">-</div>
<div class="t" style="left:549.5px;top:230.79px;font-size:13.6px;color:#31363b;width:50px;text-align:center">0.0</div>
<div class="t" style="left:613.0px;top:230.79px;font-size:13.6px;color:#e8242a;width:30px;text-align:center">A</div>
<div class="a" style="left:654px;top:225px;width:250px;height:25px;overflow:hidden">
<div class="t" style="left:3px;top:2.45px;font-size:14px;color:#31363b">Origin/20190220075617.846869.6500</div>
</div>
<div class="a" style="left:905px;top:225px;width:51px;height:25px;overflow:hidden">
<div class="t" style="left:13.5px;top:6.63px;font-size:13.2px;color:#31363b">LOCSAT</div>
</div>
<div class="t" style="left:3.6999999999999886px;top:255.87px;font-size:13.5px;color:#b1b3b5">2019-02-20 07:56:17</div>
<div class="t" style="left:136.5px;top:256.04px;font-size:13.3px;color:#31363b;width:80px;text-align:right">23:12:31</div>
<div class="t" style="left:225.5px;top:255.79px;font-size:13.6px;color:#31363b;width:60px;text-align:center">4</div>
<div class="t" style="left:287px;top:255.79px;font-size:13.6px;color:#31363b;width:60px;text-align:right">22.99 S</div>
<div class="t" style="left:341px;top:255.79px;font-size:13.6px;color:#31363b;width:70px;text-align:right">68.64 W</div>
<div class="t" style="left:407px;top:255.79px;font-size:13.6px;color:#31363b;width:70px;text-align:right">115 km</div>
<div class="t" style="left:493.0px;top:255.79px;font-size:13.6px;color:#31363b;width:40px;text-align:center">-</div>
<div class="t" style="left:549.5px;top:255.79px;font-size:13.6px;color:#31363b;width:50px;text-align:center">0.0</div>
<div class="t" style="left:613.0px;top:255.79px;font-size:13.6px;color:#e8242a;width:30px;text-align:center">A</div>
<div class="a" style="left:654px;top:250px;width:250px;height:25px;overflow:hidden">
<div class="t" style="left:3px;top:2.45px;font-size:14px;color:#31363b">Origin/20190220075617.846001.6497</div>
</div>
<div class="a" style="left:905px;top:250px;width:51px;height:25px;overflow:hidden">
<div class="t" style="left:13.5px;top:6.63px;font-size:13.2px;color:#31363b">LOCSAT</div>
</div>
</div>
<div class="a" style="left:265px;top:543px;width:715px;height:6px;background:#3daee9;border-radius:3px"></div>
<div class="t" style="left:1232.3px;top:170.35px;font-size:14px">Time:</div>
<div class="t" style="left:1332.4px;top:170.35px;font-size:14px">2009-01-13 23:12:27</div>
<div class="t" style="left:1232.3px;top:195.35px;font-size:14px">Region:</div>
<div class="t" style="left:1332.4px;top:195.35px;font-size:14px">Northern Chile</div>
<div class="t" style="left:1232.3px;top:227.65px;font-size:14px">Type:</div>
<div class="a" style="left:1333px;top:219px;width:154px;height:31px;background:linear-gradient(#f1f2f2,#e4e5e6);border:1px solid #bfc0c1;border-radius:3px;box-shadow:0 1px 1px rgba(0,0,0,0.08)"></div>
<div class="t" style="left:1339px;top:227.65px;font-size:14px;color:#31363b">earthquake</div>
<svg style="left:1467px;top:230.5px" width="14" height="8"><path d="M2 1.5 L6.5 6 L11 1.5" fill="none" stroke="#4d5257" stroke-width="1.2"/></svg>
<div class="a" style="left:1333px;top:259px;width:154px;height:31px;background:linear-gradient(#f1f2f2,#e4e5e6);border:1px solid #bfc0c1;border-radius:3px;box-shadow:0 1px 1px rgba(0,0,0,0.08)"></div>
<div class="t" style="left:1339px;top:267.65px;font-size:14px;color:#31363b">- unset -</div>
<svg style="left:1467px;top:270.5px" width="14" height="8"><path d="M2 1.5 L6.5 6 L11 1.5" fill="none" stroke="#4d5257" stroke-width="1.2"/></svg>
<div class="t" style="left:1232.3px;top:299.55px;font-size:14px">Depth:</div>
<div class="t" style="left:1319px;top:299.55px;font-size:14px;font-weight:bold;-webkit-text-stroke:0.05px currentColor;width:60px;text-align:right">156</div>
<div class="t" style="left:1386.7px;top:299.55px;font-size:14px;font-weight:bold;-webkit-text-stroke:0.05px currentColor">km</div>
<div class="t" style="left:1232.3px;top:325.05px;font-size:14px">Latitude:</div>
<div class="t" style="left:1319px;top:325.05px;font-size:14px;font-weight:bold;-webkit-text-stroke:0.05px currentColor;width:60px;text-align:right">23.04</div>
<div class="t" style="left:1386.7px;top:325.05px;font-size:14px;font-weight:bold;-webkit-text-stroke:0.05px currentColor">° S</div>
<div class="t" style="left:1232.3px;top:349.55px;font-size:14px">Longitude:</div>
<div class="t" style="left:1319px;top:349.55px;font-size:14px;font-weight:bold;-webkit-text-stroke:0.05px currentColor;width:60px;text-align:right">68.51</div>
<div class="t" style="left:1386.7px;top:349.55px;font-size:14px;font-weight:bold;-webkit-text-stroke:0.05px currentColor">° W</div>
<div class="t" style="left:1232.3px;top:374.75px;font-size:14px">Phase Count:</div>
<div class="t" style="left:1386.7px;top:374.75px;font-size:14px">9/9</div>
<div class="t" style="left:1232.3px;top:399.15px;font-size:14px">RMS Residual:</div>
<div class="t" style="left:1386.7px;top:399.15px;font-size:14px">0.2</div>
<div class="t" style="left:1232.3px;top:425.05px;font-size:14px">Agency:</div>
<div class="t" style="left:1386.7px;top:425.05px;font-size:14px">gempa</div>
<div class="t" style="left:1232.3px;top:449.55px;font-size:14px">Origin Status:</div>
<div class="t" style="left:1386.7px;top:449.55px;font-size:14px">automatic</div>
<div class="a" style="left:1233px;top:473px;width:92px;height:33px;background:linear-gradient(#f1f2f2,#e4e5e6);border:1px solid #bfc0c1;border-radius:3px;box-shadow:0 1px 1px rgba(0,0,0,0.08)"></div>
<div class="t" style="left:1233.0px;top:482.65px;font-size:14px;color:#31363b;width:92px;text-align:center">Fix</div>
<div class="a" style="left:1333px;top:475px;width:154px;height:30px;background:linear-gradient(#f1f2f2,#e4e5e6);border:1px solid #bfc0c1;border-radius:3px;box-shadow:0 1px 1px rgba(0,0,0,0.08)"></div>
<div class="t" style="left:1339px;top:483.15px;font-size:14px;color:#31363b">selected origin</div>
<svg style="left:1467px;top:486.0px" width="14" height="8"><path d="M2 1.5 L6.5 6 L11 1.5" fill="none" stroke="#4d5257" stroke-width="1.2"/></svg>
<div class="a" style="left:1233px;top:515px;width:254px;height:33px;background:linear-gradient(#f1f2f2,#e4e5e6);border:1px solid #bfc0c1;border-radius:3px;box-shadow:0 1px 1px rgba(0,0,0,0.08)"></div>
<div class="t" style="left:1233.0px;top:524.65px;font-size:14px;color:#31363b;width:254px;text-align:center">Unfix origin</div>
<div class="a" style="left:256px;top:566px;width:1242px;height:1px;background:#c4c5c6"></div>
<div class="t" style="left:1232.3px;top:586.45px;font-size:14px">Type:</div>
<div class="t" style="left:1352px;top:586.45px;font-size:14px;font-weight:bold;-webkit-text-stroke:0.05px currentColor">-</div>
<div class="t" style="left:1232.3px;top:610.85px;font-size:14px">Value:</div>
<div class="t" style="left:1352px;top:610.85px;font-size:14px">-</div>
<div class="t" style="left:1232.3px;top:635.65px;font-size:14px">Count:</div>
<div class="t" style="left:1352px;top:635.65px;font-size:14px">-</div>
<div class="t" style="left:1232.3px;top:660.65px;font-size:14px">Author:</div>
<div class="t" style="left:1232.3px;top:686.15px;font-size:14px">Status:</div>
<div class="a" style="left:1233px;top:711px;width:113px;height:33px;background:linear-gradient(#f1f2f2,#e4e5e6);border:1px solid #bfc0c1;border-radius:3px;box-shadow:0 1px 1px rgba(0,0,0,0.08)"></div>
<div class="t" style="left:1233.0px;top:720.65px;font-size:14px;color:#a3a5a7;width:113px;text-align:center">Fix type</div>
<div class="a" style="left:1402px;top:711px;width:85px;height:33px;background:linear-gradient(#f1f2f2,#e4e5e6);border:1px solid #bfc0c1;border-radius:3px;box-shadow:0 1px 1px rgba(0,0,0,0.08)"></div>
<div class="t" style="left:1402.0px;top:720.65px;font-size:14px;color:#a3a5a7;width:85px;text-align:center">Unfix</div>
<svg style="left:257px;top:575.5px" width="178" height="177.5" viewBox="0 0 178 177.5">
<defs><clipPath id="c2"><rect width="178" height="177.5"/></clipPath>
<linearGradient id="tg" x1="0" x2="1" y1="0" y2="0.3"><stop offset="0" stop-color="#cdc5b9"/><stop offset="0.45" stop-color="#d8d0c5"/><stop offset="1" stop-color="#bdb2a5"/></linearGradient>
<filter id="nz" x="0" y="0" width="100%" height="100%"><feTurbulence type="fractalNoise" baseFrequency="0.06 0.11" numOctaves="4" seed="11"/><feColorMatrix values="0 0 0 0 0.36  0 0 0 0 0.32  0 0 0 0 0.28  0 0 0 1.6 -0.72"/></filter>
<filter id="bl" x="-50%" y="-50%" width="200%" height="200%"><feGaussianBlur stdDeviation="6"/></filter>
<filter id="nzl" x="0" y="0" width="100%" height="100%"><feTurbulence type="fractalNoise" baseFrequency="0.08" numOctaves="3" seed="5"/><feColorMatrix values="0 0 0 0 0.95  0 0 0 0 0.94  0 0 0 0 0.92  0 0 0 1.5 -0.75"/></filter></defs>
<g clip-path="url(#c2)">
<rect width="178" height="177.5" fill="url(#tg)"/>
<rect width="178" height="177.5" filter="url(#nz)"/>
<rect width="178" height="177.5" filter="url(#nzl)" opacity="0.7"/>
<g filter="url(#bl)" fill="#7a6f64">
<path d="M128 0 L178 0 L178 177.5 L140 177.5 C135 140 130 100 122 80 C118 60 122 30 128 0 Z" opacity="0.32"/>
<ellipse cx="92" cy="45" rx="22" ry="32" opacity="0.22"/>
<ellipse cx="112" cy="70" rx="14" ry="22" opacity="0.2"/>
<ellipse cx="30" cy="40" rx="30" ry="30" opacity="0.16"/>
<ellipse cx="12" cy="120" rx="14" ry="40" opacity="0.16"/>
<ellipse cx="88" cy="160" rx="22" ry="20" opacity="0.2"/>
</g>
<g filter="url(#bl)" fill="#efebe5"><ellipse cx="112" cy="130" rx="18" ry="30" opacity="0.45"/><ellipse cx="50" cy="20" rx="12" ry="18" opacity="0.35"/><ellipse cx="45" cy="150" rx="15" ry="18" opacity="0.3"/></g>
<path d="M22.1 0 C24 40 24.4 90 24 120 C23 150 22 165 21.7 177.5" stroke="#f0a830" stroke-width="1.6" fill="none"/>
<path d="M62.8 0 C66 30 69 60 69.5 80 C70 110 70 150 70 177.5" stroke="#f2e020" stroke-width="1.7" fill="none"/>
<path d="M131.6 0 C135 20 138 40 139.5 55 C143 85 146 105 147.4 120 C150 145 153 165 154.2 177.5" stroke="#98e020" stroke-width="1.7" fill="none"/>
<path d="M137.3 27.6 C141 40 145 50 146.3 59.2 C145 64 144 67 144 70.5 C146 76 148 80 148.5 84 L178 85" stroke="#3a3530" stroke-width="0.9" fill="none"/>
<path d="M150 177.5 C160 172 170 168 178 166" stroke="#3a3530" stroke-width="0.8" fill="none"/>
<g fill="none" stroke="#6a3a14" stroke-width="1.5"><ellipse cx="82" cy="45" rx="4.8" ry="8.5" transform="rotate(15 82 45)"/><ellipse cx="55" cy="79" rx="2.5" ry="4.2" transform="rotate(35 55 79)"/><rect x="58" y="88" width="6.5" height="6" rx="1.5" transform="rotate(10 61 91)"/><ellipse cx="34" cy="123.5" rx="7" ry="5.3"/><rect x="12.5" y="166" width="13" height="12" rx="2"/></g>
<g fill="#6a3a14"><circle cx="32" cy="122" r="0.8"/><circle cx="36" cy="124" r="0.8"/><circle cx="81" cy="44" r="0.8"/><circle cx="83" cy="48" r="0.8"/><path d="M33 23 l2 -1 l0.5 2.5 l-2 1z"/><path d="M82 120 l1.5 -1 l1 3 l-1.5 1z"/><path d="M2 122 h3.5 v2 h-3.5z"/></g>
<text x="67" y="62" font-family="Liberation Sans" font-size="9.5" fill="#6a6258">Calama</text>
<g fill="none" stroke="#1a20f0" stroke-width="2.2" stroke-dasharray="3 2.2"><circle cx="120.3" cy="9.8" r="6.3"/><circle cx="138.4" cy="54.5" r="6.3"/><circle cx="153" cy="119.5" r="6"/><circle cx="159.4" cy="114" r="6"/></g>
<circle cx="68.9" cy="74.6" r="5.3" fill="#b080e0" stroke="#9a48e0" stroke-width="1.8" opacity="0.9"/>
<g fill="#9a3ee0" opacity="0.9"><circle cx="96" cy="93.5" r="6.3"/><circle cx="104" cy="97.5" r="6.3"/><circle cx="108" cy="102.5" r="6.3"/></g>
<circle cx="103" cy="96.5" r="3.5" fill="#000"/>
<g fill="#8ab8c8" opacity="0.8"><ellipse cx="153" cy="2" rx="3.5" ry="2"/><ellipse cx="153.5" cy="39" rx="2.5" ry="1.8"/><circle cx="113.6" cy="127" r="1.8"/><circle cx="109" cy="132" r="1.3"/></g>
<path d="M60 175 l2 -3 l2 3z" fill="#6a3a14"/>
</g></svg>
<div class="a" style="left:444px;top:575px;width:771px;height:178px;background:#fcfcfc;border:1px solid #c9cacb;border-radius:2px"></div>
<div class="a" style="left:445px;top:576px;width:769px;height:32px;background:#eff0f1;border-bottom:1px solid #dcdddd"></div>
<div class="a" style="left:584.5px;top:577px;width:1px;height:30px;background:#d2d3d4"></div>
<div class="a" style="left:635.5px;top:577px;width:1px;height:30px;background:#d2d3d4"></div>
<div class="a" style="left:686.3px;top:577px;width:1px;height:30px;background:#d2d3d4"></div>
<div class="a" style="left:752.6px;top:577px;width:1px;height:30px;background:#d2d3d4"></div>
<div class="a" style="left:807.4px;top:577px;width:1px;height:30px;background:#d2d3d4"></div>
<div class="a" style="left:859.6px;top:577px;width:1px;height:30px;background:#d2d3d4"></div>
<div class="a" style="left:933.6px;top:577px;width:1px;height:30px;background:#d2d3d4"></div>
<div class="a" style="left:1038.4px;top:577px;width:1px;height:30px;background:#d2d3d4"></div>
<div class="t" style="left:451.5px;top:585.59px;font-size:13.6px">Created(UTC)</div>
<div class="t" style="left:591.5px;top:585.59px;font-size:13.6px">TP</div>
<div class="t" style="left:642.5px;top:585.59px;font-size:13.6px">M</div>
<div class="t" style="left:693px;top:585.59px;font-size:13.6px">Count</div>
<div class="t" style="left:759px;top:585.59px;font-size:13.6px">RMS</div>
<div class="t" style="left:814px;top:585.59px;font-size:13.6px">Stat</div>
<div class="t" style="left:866.4px;top:585.59px;font-size:13.6px">Agency</div>
<div class="t" style="left:940.7px;top:585.59px;font-size:13.6px">Author</div>
<div class="t" style="left:1045.5px;top:585.59px;font-size:13.6px">ID</div>
<svg style="left:566px;top:586px" width="16" height="12"><path d="M2.5 8.5 L7.5 3.8 L12.5 8.5" fill="none" stroke="#4d5257" stroke-width="1.2"/></svg>
<div class="t" style="left:448.5px;top:613.87px;font-size:13.5px;color:#b1b3b5">2019-02-20 07:56:37</div>
<div class="t" style="left:588.8px;top:613.79px;font-size:13.6px">ML</div>
<div class="t" style="left:636.5px;top:613.79px;font-size:13.6px;width:50px;text-align:center">2.00</div>
<div class="t" style="left:694.5px;top:613.79px;font-size:13.6px;width:50px;text-align:center">6</div>
<div class="t" style="left:755.0px;top:613.79px;font-size:13.6px;width:50px;text-align:center">0.2</div>
<div class="t" style="left:862.3px;top:613.45px;font-size:14px;width:70px;text-align:center">gempa</div>
<div class="a" style="left:934px;top:608px;width:104px;height:25px;overflow:hidden">
<div class="t" style="left:6.7px;top:5.36px;font-size:14.1px">scmag@dirker</div>
</div>
<div class="a" style="left:1039px;top:608px;width:175px;height:25px;overflow:hidden">
<div class="t" style="left:3.3px;top:5.36px;font-size:14.1px">Origin/20190220075617.854208.6543</div>
</div>
<div class="a" style="left:445px;top:633px;width:769px;height:25px;background:#eff0f1"></div>
<div class="t" style="left:448.5px;top:638.87px;font-size:13.5px;color:#b1b3b5">2019-02-20 07:56:37</div>
<div class="t" style="left:588.8px;top:638.79px;font-size:13.6px">MLv</div>
<div class="t" style="left:636.5px;top:638.79px;font-size:13.6px;width:50px;text-align:center">2.42</div>
<div class="t" style="left:694.5px;top:638.79px;font-size:13.6px;width:50px;text-align:center">7</div>
<div class="t" style="left:755.0px;top:638.79px;font-size:13.6px;width:50px;text-align:center">0.1</div>
<div class="t" style="left:862.3px;top:638.45px;font-size:14px;width:70px;text-align:center">gempa</div>
<div class="a" style="left:934px;top:633px;width:104px;height:25px;overflow:hidden">
<div class="t" style="left:6.7px;top:5.36px;font-size:14.1px">scmag@dirker</div>
</div>
<div class="a" style="left:1039px;top:633px;width:175px;height:25px;overflow:hidden">
<div class="t" style="left:3.3px;top:5.36px;font-size:14.1px">Origin/20190220075617.854208.6543</div>
</div>
<div class="t" style="left:448.5px;top:663.87px;font-size:13.5px;color:#b1b3b5">2019-02-20 07:56:37</div>
<div class="t" style="left:588.8px;top:663.79px;font-size:13.6px">M</div>
<div class="t" style="left:636.5px;top:663.79px;font-size:13.6px;width:50px;text-align:center">2.28</div>
<div class="t" style="left:694.5px;top:663.79px;font-size:13.6px;width:50px;text-align:center">7</div>
<div class="t" style="left:862.3px;top:663.45px;font-size:14px;width:70px;text-align:center">gempa</div>
<div class="a" style="left:934px;top:658px;width:104px;height:25px;overflow:hidden">
<div class="t" style="left:6.7px;top:5.36px;font-size:14.1px">scmag@dirker</div>
</div>
<div class="a" style="left:1039px;top:658px;width:175px;height:25px;overflow:hidden">
<div class="t" style="left:3.3px;top:5.36px;font-size:14.1px">Origin/20190220075617.854208.6543</div>
</div>
<div class="a" style="left:452px;top:738.5px;width:591px;height:6.5px;background:#8f9091;border-radius:3px"></div>
<svg style="left:1490px;top:788px" width="24" height="24">
<path d="M5.5 4 L5.5 8" stroke="#9aa4e0" stroke-width="2.2" stroke-linecap="round"/>
<path d="M9.5 4.5 Q11 3.3 12.5 4.5 L17.5 9.5 Q18.7 11 17.5 12.5 L12.5 17.5 Q11 18.7 9.5 17.5 L4.5 12.5 Q3.3 11 4.5 9.5 Z" fill="#e6e8fd" stroke="#a3a8e6" stroke-width="1.3"/>
<path d="M14 14 L17 17.5" stroke="#f2b21c" stroke-width="2.8" stroke-linecap="round"/><path d="M10.5 17 L13 20" stroke="#f2b21c" stroke-width="2.8" stroke-linecap="round"/></svg>
<div class="a" style="left:1128px;top:266px;width:237px;height:53px;background:#eff0f1;border:1px solid #c4c5c6;box-shadow:1px 2px 5px rgba(0,0,0,0.3)"></div>
<div class="a" style="left:1128px;top:266px;width:237px;height:27px;background:#3daee9"></div>
<div class="t" style="left:1135.6px;top:272.75px;font-size:14px;color:#f4f9fc">Copy cell to clipboard</div>
<div class="t" style="left:1135.6px;top:299.95px;font-size:14px">Copy selected rows to clipboard</div>
<svg style="left:0;top:0" width="1534" height="816"><path d="M616.1,88.0 H741.0 Q746.0,88.0 746.0,93.0 V117.6 Q746.0,122.6 741.0,122.6 H689.7 L678.4,156.6 L668.3,122.6 H616.1 Q611.1,122.6 611.1,117.6 V93.0 Q611.1,88.0 616.1,88.0 Z" fill="#fff" stroke="#000" stroke-width="2.4" stroke-linejoin="miter"/></svg>
<div class="t" style="left:615.7px;top:93.18px;font-size:22px;color:#000;transform:scaleX(1.2175);transform-origin:0 0"><b>Origin list</b></div>
<svg style="left:0;top:0" width="1534" height="816"><path d="M618.9000000000001,505.9 H807.9 Q812.9,505.9 812.9,510.9 V534.5 Q812.9,539.5 807.9,539.5 H723.7 L712.1,573.7 L702.7,539.5 H618.9000000000001 Q613.9000000000001,539.5 613.9000000000001,534.5 V510.9 Q613.9000000000001,505.9 618.9000000000001,505.9 Z" fill="#fff" stroke="#000" stroke-width="2.4" stroke-linejoin="miter"/></svg>
<div class="t" style="left:622.2px;top:510.58px;font-size:22px;color:#000;transform:scaleX(1.2301);transform-origin:0 0"><b>Magnitude list</b></div>
<svg style="left:0;top:0" width="1534" height="816"><path d="M156.7,441.7 H263.7 L237.5,366.8 L242.5,441.7 H372.8 Q377.8,441.7 377.8,446.7 V470.40000000000003 Q377.8,475.40000000000003 372.8,475.40000000000003 H156.7 Q151.7,475.40000000000003 151.7,470.40000000000003 V446.7 Q151.7,441.7 156.7,441.7 Z" fill="#fff" stroke="#000" stroke-width="2.4" stroke-linejoin="miter"/></svg>
<div class="t" style="left:157.5px;top:448.18px;font-size:22px;color:#000;transform:scaleX(1.1686);transform-origin:0 0"><b>Focal Mechanism</b></div>
<svg style="left:0;top:0" width="1534" height="816"><path d="M1151.1000000000001,196.7 H1208.8 Q1213.8,196.7 1213.8,201.7 V226.10000000000002 Q1213.8,231.10000000000002 1208.8,231.10000000000002 H1190.2 L1179.7,264.7 L1170,231.10000000000002 H1151.1000000000001 Q1146.1000000000001,231.10000000000002 1146.1000000000001,226.10000000000002 V201.7 Q1146.1000000000001,196.7 1151.1000000000001,196.7 Z" fill="#fff" stroke="#000" stroke-width="2.4" stroke-linejoin="miter"/></svg>
<div class="t" style="left:1152.8px;top:201.98px;font-size:22px;color:#000;transform:scaleX(1.1341);transform-origin:0 0">copy</div>
<svg style="left:0;top:0" width="1534" height="816"><path d="M1371.7,147.6 H1483.8 Q1488.8,147.6 1488.8,152.6 V177.10000000000002 Q1488.8,182.10000000000002 1483.8,182.10000000000002 H1438.5 L1427,215.6 L1418.4,182.10000000000002 H1371.7 Q1366.7,182.10000000000002 1366.7,177.10000000000002 V152.6 Q1366.7,147.6 1371.7,147.6 Z" fill="#fff" stroke="#000" stroke-width="2.4" stroke-linejoin="miter"/></svg>
<div class="t" style="left:1378.4px;top:152.88px;font-size:22px;color:#000;transform:scaleX(1.1742);transform-origin:0 0"><b>B1</b>: type</div>
<svg style="left:0;top:0" width="1534" height="816"><path d="M1210.6000000000001,409.4 H1322.3999999999999 Q1327.3999999999999,409.4 1327.3999999999999,414.4 V438.5 Q1327.3999999999999,443.5 1322.3999999999999,443.5 H1277.1 L1266.6,476.3 L1257.5,443.5 H1210.6000000000001 Q1205.6000000000001,443.5 1205.6000000000001,438.5 V414.4 Q1205.6000000000001,409.4 1210.6000000000001,409.4 Z" fill="#fff" stroke="#000" stroke-width="2.4" stroke-linejoin="miter"/></svg>
<div class="t" style="left:1227.5px;top:413.78px;font-size:22px;color:#000;transform:scaleX(1.1853);transform-origin:0 0"><b>B2</b>: fix</div>
<svg style="left:0;top:0" width="1534" height="816"><path d="M1363.3,455.09999999999997 H1475.2 Q1480.2,455.09999999999997 1480.2,460.09999999999997 V484.2 Q1480.2,489.2 1475.2,489.2 H1428.9 L1418.2,522 L1409.8,489.2 H1363.3 Q1358.3,489.2 1358.3,484.2 V460.09999999999997 Q1358.3,455.09999999999997 1363.3,455.09999999999997 Z" fill="#fff" stroke="#000" stroke-width="2.4" stroke-linejoin="miter"/></svg>
<div class="t" style="left:1367.5px;top:459.98px;font-size:22px;color:#000;transform:scaleX(1.1761);transform-origin:0 0"><b>B3</b>: unfix</div>
<svg style="left:0;top:0" width="1534" height="816"><path d="M1213.9,643.3000000000001 H1325.6 Q1330.6,643.3000000000001 1330.6,648.3000000000001 V672.3 Q1330.6,677.3 1325.6,677.3 H1280.8 L1269.7,709.8 L1260.2,677.3 H1213.9 Q1208.9,677.3 1208.9,672.3 V648.3000000000001 Q1208.9,643.3000000000001 1213.9,643.3000000000001 Z" fill="#fff" stroke="#000" stroke-width="2.4" stroke-linejoin="miter"/></svg>
<div class="t" style="left:1230.4px;top:647.68px;font-size:22px;color:#000;transform:scaleX(1.1965);transform-origin:0 0"><b>B4</b>: fix</div>
<svg style="left:0;top:0" width="1534" height="816"><path d="M1386.7,643.3000000000001 H1498.3999999999999 Q1503.3999999999999,643.3000000000001 1503.3999999999999,648.3000000000001 V672.3 Q1503.3999999999999,677.3 1498.3999999999999,677.3 H1453.6 L1442.1,709.8 L1432,677.3 H1386.7 Q1381.7,677.3 1381.7,672.3 V648.3000000000001 Q1381.7,643.3000000000001 1386.7,643.3000000000001 Z" fill="#fff" stroke="#000" stroke-width="2.4" stroke-linejoin="miter"/></svg>
<div class="t" style="left:1390.5px;top:647.68px;font-size:22px;color:#000;transform:scaleX(1.1807);transform-origin:0 0"><b>B5</b>: unfix</div>
</body></html>
